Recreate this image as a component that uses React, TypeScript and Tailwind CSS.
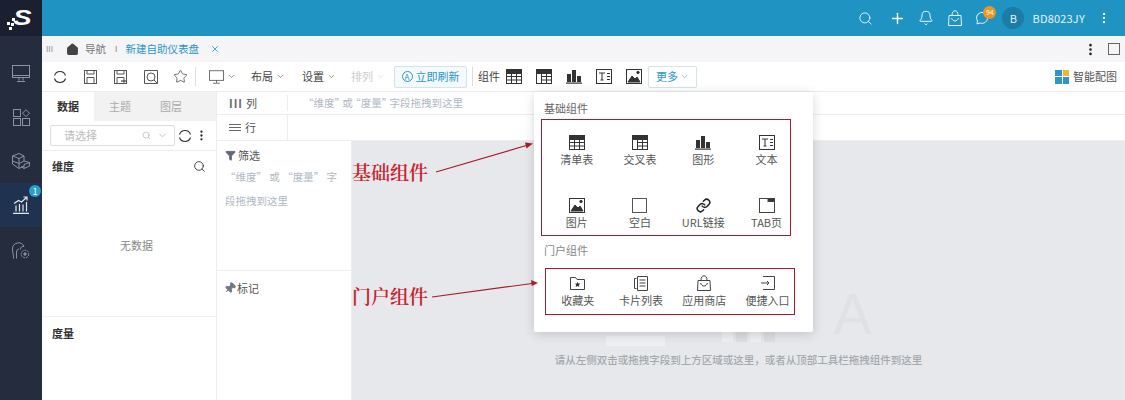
import type { ReactNode } from "react";
import { ChevronDown, Search, Plus, Bell, EllipsisVertical, House, X, Link, Star, Pin, Filter } from "lucide-react";

const font = "font-['Noto_Sans_CJK_SC','Liberation_Sans',sans-serif]";

function TableIcon({ cross = false }: { cross?: boolean }) {
  return (
    <svg width="16" height="15" viewBox="0 0 16 15" fill="none" stroke="#333" strokeWidth="1">
      <rect x="0.5" y="0.5" width="15" height="14" />
      <rect x="0.5" y="0.5" width="15" height="4" fill="#333" />
      {cross ? <path d="M5.5 4v10.5M5.5 7.5h10M5.5 11h10M10.5 4v10.5" /> : <path d="M5.5 4v10.5M10.5 4v10.5M.5 7.5h15M.5 11h15" />}
    </svg>
  );
}

function ChartIcon() {
  return (
    <svg width="16" height="15" viewBox="0 0 16 15" fill="#333">
      <rect x="1" y="5" width="4" height="8" />
      <rect x="6" y="1" width="4" height="12" />
      <rect x="11" y="7" width="4" height="6" />
      <rect x="0" y="13.5" width="16" height="1.2" />
    </svg>
  );
}

function TextIcon() {
  return (
    <svg width="16" height="15" viewBox="0 0 16 15" fill="none" stroke="#333" strokeWidth="1">
      <rect x="0.5" y="0.5" width="15" height="14" />
      <path d="M3 4h6M6 4v7M4.5 11h3M11 4.5h3M11 7.5h3M11 10.5h3" />
    </svg>
  );
}

function ImageIcon() {
  return (
    <svg width="16" height="15" viewBox="0 0 16 15" fill="none" stroke="#333" strokeWidth="1">
      <rect x="0.5" y="0.5" width="15" height="14" />
      <path d="M2 13l4-6 3 3 2-2 3 5z" fill="#333" />
      <circle cx="12" cy="3.5" r="1.2" fill="#333" />
    </svg>
  );
}

function TabIcon() {
  return (
    <svg width="16" height="15" viewBox="0 0 16 15" fill="none" stroke="#444" strokeWidth="1">
      <rect x="0.5" y="0.5" width="15" height="14" />
      <rect x="9" y="0.5" width="6.5" height="3" fill="#333" />
    </svg>
  );
}

function FolderStar() {
  return (
    <svg width="15" height="13" viewBox="0 0 15 13" fill="none" stroke="#444" strokeWidth="1">
      <path d="M.5 12.5V.5h5l1.5 2h7.5v10z" />
      <path d="M7.5 4.5l.9 1.900 2 .2-1.500 1.400.4 2-1.800-1-1.800 1 .4-2L5.100 6.600l2-.2z" fill="#333" stroke="none" />
    </svg>
  );
}

function CardList() {
  return (
    <svg width="14" height="15" viewBox="0 0 14 15" fill="none" stroke="#444" strokeWidth="1">
      <path d="M2.5 2.5H.5v10h2M4 .5h9.5v14H3.5V.5z" />
      <path d="M5.5 4h6M5.5 7h6M5.5 10h6" />
    </svg>
  );
}

function BagIcon({ stroke = "#444" }: { stroke?: string }) {
  return (
    <svg width="14" height="16" viewBox="0 0 14 16" fill="none" stroke={stroke} strokeWidth="1">
      <path d="M1 5.500h12l.5 10H.5zM4 5.500C4 2.500 5 .8 7 .8s3 1.700 3 4.700M3.500 8c.8 2 2 3 3.500 3s2.700-1 3.500-3" />
    </svg>
  );
}

function EntryIcon() {
  return (
    <svg width="14" height="14" viewBox="0 0 14 14" fill="none" stroke="#444" strokeWidth="1">
      <path d="M2 .5h11.500v13H2M0 7h8M6 5l2 2-2 2" />
    </svg>
  );
}

function RefreshRing() {
  return (
    <svg width="14" height="14" viewBox="0 0 14 14" fill="none" stroke="#333" strokeWidth="1.1">
      <path d="M1.500 5.500A5.800 5.800 0 0 1 12.500 5.500M12.500 8.500A5.800 5.800 0 0 1 1.500 8.500" />
    </svg>
  );
}

function Save({ extra = false }: { extra?: boolean }) {
  return (
    <svg width="13" height="14" viewBox="0 0 13 14" fill="none" stroke="#555" strokeWidth="1">
      <rect x="0.5" y="0.5" width="12" height="13" />
      <path d="M3 .5v3.500h7V.5M3 13.500V7.500h7v6" />
      {extra && <path d="M7 11h5" stroke="#222" />}
    </svg>
  );
}

function Preview() {
  return (
    <svg width="14" height="14" viewBox="0 0 14 14" fill="none" stroke="#555" strokeWidth="1">
      <path d="M.5.500h13v13H.5z" />
      <circle cx="7" cy="7" r="4" />
      <path d="M10 10l3 3" />
    </svg>
  );
}

function Monitor() {
  return (
    <svg width="15" height="14" viewBox="0 0 18 16" fill="none" stroke="#555" strokeWidth="1">
      <rect x="0.5" y="0.5" width="17" height="11.500" />
      <path d="M9 12v3M5 15.500h8" />
    </svg>
  );
}

function NavIcon({ i }: { i: number }) {
  const c = i === 3 ? "#e4e9ef" : "#8b93a3";
  if (i === 0)
    return (
      <svg width="18" height="17" viewBox="0 0 18 17" fill="none" stroke={c}>
        <rect x="0.5" y="0.5" width="17" height="12" />
        <path d="M.5 10.500h17M7 13v2.500M11 13v2.500M5 16.500h8" />
      </svg>
    );
  if (i === 1)
    return (
      <svg width="17" height="17" viewBox="0 0 17 17" fill="none" stroke={c}>
        <rect x="0.5" y="0.5" width="7" height="7" />
        <rect x="0.5" y="9.500" width="7" height="7" />
        <rect x="9.500" y="9.500" width="7" height="7" />
        <path d="M13 .7l3.500 3.500L13 7.700 9.500 4.200z" />
      </svg>
    );
  if (i === 2)
    return (
      <svg width="18" height="16" viewBox="0 0 18 16" fill="none" stroke={c}>
        <path d="M7 .5l5 2.500v5L7 10.500 .5 8V3zM.5 3L7 5.500 12 3M7 5.500v5M.5 8v3L7 15.500V10.500M7 15.500l5-2.500M12 8l5.500 1.500v3.500L12 15.500 9 13.500M12 11.500l5.500-2M12 11.500v4" />
      </svg>
    );
  if (i === 3)
    return (
      <svg width="16" height="18" viewBox="0 0 16 18" fill="none" stroke={c} strokeWidth="1.2">
        <path d="M1 7.500L5.500 4.500 8.500 6 13.500 1.500M10.500 1h3.500v3.500M3 9.500v6M6.500 8v7.500M10 8.500v7M13.500 6v9.500M0 17.300h16" />
      </svg>
    );
  return (
    <svg width="18" height="19" viewBox="0 0 18 19" fill="none" stroke={c}>
      <path d="M1.500 18.500c.5-3-1-5-1-9.500a6 6 0 0 1 11.500-2.500c-2.500-.5-3.500 1-3.500 3M4.500 18.500V12c0-1.500 1-3 2.500-3" />
      <circle cx="13" cy="14" r="3.800" strokeDasharray="2 .8" />
      <circle cx="13" cy="14" r="1.200" fill={c} />
    </svg>
  );
}

function ToolBtn({ label }: { label: string }) {
  return (
    <span className="flex items-center gap-[3px]">
      {label}
      <ChevronDown size={9} strokeWidth={1.5} />
    </span>
  );
}

function PickItem({ icon, label }: { icon: ReactNode; label: string }) {
  return (
    <div className="flex flex-col items-center">
      <div className="flex h-[16px] items-center">{icon}</div>
      <span className="text-[11px] leading-[18px] text-[#555]">{label}</span>
    </div>
  );
}

function ComponentMenu() {
  return (
    <div className="absolute left-[534px] top-[92px] z-10 h-[240px] w-[279px] rounded-[2px] bg-white pl-[7px] pr-[22px] shadow-[0_2px_12px_rgba(0,0,0,0.16)]">
      <div className="pl-[3px] pt-[8px] text-[11px] leading-[16px] text-[#666]">基础组件</div>
      <div className="mt-[3px] grid h-[117px] grid-cols-[repeat(4,63.3px)] grid-rows-[63px_1fr] border border-[#a81c2a] pl-[3px] pt-[14px]">
        <PickItem icon={<TableIcon />} label="清单表" />
        <PickItem icon={<TableIcon cross />} label="交叉表" />
        <PickItem icon={<ChartIcon />} label="图形" />
        <PickItem icon={<TextIcon />} label="文本" />
        <PickItem icon={<ImageIcon />} label="图片" />
        <PickItem icon={<span className="block h-[15px] w-[15px] border border-[#555]" />} label="空白" />
        <PickItem icon={<Link size={15} strokeWidth={2.4} color="#222" />} label="URL链接" />
        <PickItem icon={<TabIcon />} label="TAB页" />
      </div>
      <div className="pl-[3px] pt-[6px] text-[11px] leading-[16px] text-[#888]">门户组件</div>
      <div className="-mr-[4px] ml-[4px] mt-[10px] grid h-[47px] grid-cols-[repeat(4,63.3px)] border border-[#a81c2a] pt-[6px]">
        <PickItem icon={<FolderStar />} label="收藏夹" />
        <PickItem icon={<CardList />} label="卡片列表" />
        <PickItem icon={<BagIcon />} label="应用商店" />
        <PickItem icon={<EntryIcon />} label="便捷入口" />
      </div>
    </div>
  );
}

function Annotations() {
  return (
    <>
      <svg className="absolute left-[352px] top-[130px] z-20" width="190" height="180" viewBox="0 0 190 180" fill="none">
        <path d="M84 42L176 15" stroke="#a81c2a" strokeWidth="1.2" />
        <path d="M181 13.500l-8-1 1.500 6z" fill="#a81c2a" />
        <path d="M80 167L180 153.500" stroke="#a81c2a" strokeWidth="1.2" />
        <path d="M186 153l-7-3 .8 6z" fill="#a81c2a" />
      </svg>
      <span className="absolute left-[352px] top-[160px] z-20 font-['Noto_Serif_CJK_SC','Noto_Sans_CJK_SC',serif] text-[19px] font-semibold leading-[24px] text-[#c8202c]">基础组件</span>
      <span className="absolute left-[352px] top-[284px] z-20 font-['Noto_Serif_CJK_SC','Noto_Sans_CJK_SC',serif] text-[19px] font-semibold leading-[24px] text-[#c8202c]">门户组件</span>
    </>
  );
}

export default function App() {
  return (
    <div className={`relative flex h-[400px] w-[1125px] overflow-hidden bg-white text-[11px] ${font}`}>
      {/* left nav */}
      <div className="flex w-[42px] shrink-0 flex-col bg-[#252c3e]">
        <div className="relative flex h-[36px] items-center justify-center bg-[#1a2030]">
          <span className="ml-[3px] scale-x-125 font-['Liberation_Sans',sans-serif] text-[22px] font-bold italic leading-none text-white">S</span>
          <svg className="absolute left-[7px] top-[18px]" width="9" height="12" viewBox="0 0 9 12" fill="#fff">
            <rect x="5" y="0" width="3" height="3" />
            <rect x="0" y="4" width="3" height="3" />
            <rect x="4" y="5" width="3" height="3" />
            <rect x="2" y="9" width="3" height="3" />
          </svg>
        </div>
        <div className="flex flex-col pt-[15px]">
          {[0, 1, 2, 3, 4].map((i) => (
            <div key={i} className={`relative flex h-[44px] items-center justify-center ${i === 3 ? "bg-[#1f3350]" : ""}`}>
              <NavIcon i={i} />
              {i === 3 && (
                <span className="absolute right-[1px] top-[2px] flex h-[12px] w-[12px] items-center justify-center rounded-full bg-[#2a9fc9] text-[9px] leading-none text-white">1</span>
              )}
            </div>
          ))}
        </div>
      </div>

      <div className="flex min-w-0 flex-1 flex-col">
        {/* top bar */}
        <div className="flex h-[36px] shrink-0 items-center justify-end bg-[#1f93c2] pr-[14px] text-white">
          <Search size={15} strokeWidth={1.5} color="#e6f4fa" />
          <Plus size={17} strokeWidth={2} className="ml-[16px]" />
          <Bell size={16} strokeWidth={1.4} className="ml-[12px]" />
          <span className="ml-[14px] flex"><BagIcon stroke="#e6f4fa" /></span>
          <span className="relative ml-[12px] flex">
            <svg width="16" height="15" viewBox="0 0 16 15" fill="none" stroke="#e6f4fa">
              <path d="M3 13l.5-3A5.500 5.500 0 1 1 6 12z" />
            </svg>
            <span className="absolute -right-[6px] -top-[5px] flex h-[13px] w-[13px] items-center justify-center rounded-full bg-[#f0941e] text-[7px] leading-none text-white">94</span>
          </span>
          <span className="ml-[12px] flex h-[22px] w-[22px] items-center justify-center rounded-full bg-[#1b7ca6] text-[11px] text-[#e6f4fa]">B</span>
          <span className="ml-[8px] text-[11px] tracking-[0.2px] text-[#e6f4fa]">BD8023JY</span>
          <EllipsisVertical size={14} strokeWidth={2} className="ml-[12px]" />
        </div>

        {/* tabs */}
        <div className="flex h-[26px] shrink-0 items-center bg-[#f5f5f7] pl-[4px] pr-[5px] text-[10.5px] text-[#777]">
          <span className="text-[8px] text-[#888]">III</span>
          <House size={13} fill="#444" color="#444" className="ml-[13px]" />
          <span className="ml-[6px]">导航</span>
          <span className="ml-[9px] text-[8px]">I</span>
          <span className="ml-[8px] text-[#2a97c4]">新建自助仪表盘</span>
          <X size={10} color="#2a97c4" className="ml-[11px]" />
          <EllipsisVertical size={15} strokeWidth={2.2} color="#222" className="ml-auto" />
          <span className="ml-[10px] block h-[12px] w-[12px] border border-[#666]" />
        </div>

        {/* toolbar */}
        <div className="flex h-[30px] shrink-0 items-center border-b border-[#ececec] pl-[11px] pr-[8px] text-[11px] text-[#444]">
          <RefreshRing />
          <span className="ml-[17px] flex"><Save /></span>
          <span className="ml-[17px] flex"><Save extra /></span>
          <span className="ml-[17px] flex"><Preview /></span>
          <Star size={15} strokeWidth={1.1} color="#333" className="ml-[15px]" />
          <span className="ml-[7px] h-[19px] w-px bg-[#ddd]" />
          <span className="ml-[13px] flex items-center gap-[3px]"><Monitor /><ChevronDown size={9} strokeWidth={1.5} /></span>
          <span className="ml-[15px]"><ToolBtn label="布局" /></span>
          <span className="ml-[17px]"><ToolBtn label="设置" /></span>
          <span className="ml-[15px] text-[#ccc]"><ToolBtn label="排列" /></span>
          <span className="ml-[9px] flex h-[22px] w-[73px] items-center justify-center gap-[3px] rounded-[2px] border border-[#d5e3ea] bg-[#f4f9fb] text-[#2a97c4]">
            <span className="flex h-[11px] w-[11px] items-center justify-center rounded-full border border-[#2a97c4] text-[8px] leading-none">A</span>
            立即刷新
          </span>
          <span className="ml-[5px] h-[19px] w-px bg-[#ddd]" />
          <span className="ml-[5px]">组件</span>
          <span className="ml-[6px] flex"><TableIcon /></span>
          <span className="ml-[14px] flex"><TableIcon cross /></span>
          <span className="ml-[14px] flex"><ChartIcon /></span>
          <span className="ml-[14px] flex"><TextIcon /></span>
          <span className="ml-[14px] flex"><ImageIcon /></span>
          <span className="ml-[6px] flex h-[22px] w-[49px] items-center justify-center gap-[2px] rounded-[2px] border border-[#d5e3ea] text-[#2a97c4]">
            更多<ChevronDown size={9} strokeWidth={1.5} />
          </span>
          <span className="ml-auto grid h-[14px] w-[14px] grid-cols-2 gap-px">
            <i className="bg-[#2a97c4]" /><i className="bg-[#f2b632]" /><i className="bg-[#2a97c4]" /><i className="bg-[#2a97c4]" />
          </span>
          <span className="ml-[4px] text-[#555]">智能配图</span>
        </div>

        <div className="flex min-h-0 flex-1">
          {/* data panel */}
          <div className="flex w-[175px] shrink-0 flex-col border-r border-[#eee]">
            <div className="flex h-[29px] shrink-0 bg-[#f2f2f2] text-[11px] text-[#aaa]">
              <span className="flex w-[52px] items-center justify-center bg-white font-bold text-[#333]">数据</span>
              <span className="flex w-[52px] items-center justify-center">主题</span>
              <span className="flex w-[50px] items-center justify-center">图层</span>
            </div>
            <div className="flex h-[30px] shrink-0 items-center border-b border-[#eee] pl-[8px]">
              <div className="flex h-[21px] w-[125px] items-center rounded-[2px] border border-[#ddd] pl-[13px] pr-[6px] text-[#bbb]">
                请选择
                <Search size={9} color="#bbb" className="ml-auto" />
                <ChevronDown size={11} color="#bbb" className="ml-[6px]" />
              </div>
              <span className="ml-[3px] flex"><RefreshRing /></span>
              <EllipsisVertical size={13} strokeWidth={2.2} color="#222" className="ml-[3px]" />
            </div>
            <div className="flex h-[166px] shrink-0 flex-col border-b border-[#f0f0f0] px-[10px]">
              <div className="flex h-[30px] items-center justify-between">
                <span className="font-bold text-[#333]">维度</span>
                <Search size={13} strokeWidth={1.5} color="#222" />
              </div>
              <div className="ml-[15px] mt-[56px] text-center text-[#888]">无数据</div>
            </div>
            <div className="px-[10px] pt-[8px] font-bold text-[#333]">度量</div>
          </div>

          <div className="flex min-w-0 flex-1 flex-col">
            {/* shelves */}
            <div className="flex h-[23px] shrink-0 items-center border-b border-[#eee] text-[#555]">
              <span className="flex w-[71px] items-center gap-[3px] border-r border-[#eee] pl-[12px]">
                <span className="font-bold tracking-[1px] text-[#667]">III</span>列
              </span>
              <span className="ml-[15px] text-[10.5px] text-[#b0b8c4] [word-spacing:-5px]">“维度” 或 “度量” 字段拖拽到这里</span>
            </div>
            <div className="flex h-[26px] shrink-0 items-center border-b border-[#eee] text-[#555]">
              <span className="flex h-full w-[71px] items-center gap-[4px] border-r border-[#eee] pl-[12px]">
                <span className="flex w-[12px] flex-col gap-[2px]">
                  <i className="h-px bg-[#667]" /><i className="h-px bg-[#667]" /><i className="h-px bg-[#667]" />
                </span>
                行
              </span>
            </div>

            <div className="flex min-h-0 flex-1">
              {/* filters */}
              <div className="flex w-[135px] shrink-0 flex-col border-r border-[#eee]">
                <div className="h-[130px] shrink-0 border-b border-[#eee] pl-[8px] pr-[4px] pt-[6px]">
                  <div className="flex items-center gap-[2px] text-[#555]">
                    <Filter size={11} fill="#667" color="#667" />筛选
                  </div>
                  <p className="mt-px text-[10.5px] leading-[24px] text-[#b0b8c4]">“维度” 或 “度量” 字<br />段拖拽到这里</p>
                </div>
                <div className="flex items-center gap-px pl-[7px] pt-[9px] text-[#555]">
                  <Pin size={12} fill="#778" color="#778" className="rotate-45" />标记
                </div>
              </div>

              {/* canvas */}
              <div className="flex min-w-0 flex-1 flex-col items-center bg-[#e6e8eb] pt-[148px]">
                <div className="flex h-[58px] w-[266px] items-end justify-between">
                  <i className="mb-px block h-[10px] w-[59px] bg-[#eef0f2]" />
                  <div className="mb-[5px] flex h-[10px] gap-[3px]">
                    <i className="block w-[11px] bg-[#eef0f2]" />
                    <i className="block w-[11px] bg-[#dcdee1]" />
                    <i className="block w-[11px] bg-[#eef0f2]" />
                    <i className="block w-[11px] bg-[#dcdee1]" />
                  </div>
                  <span className="mb-[9px] font-['Liberation_Sans',sans-serif] text-[57px] leading-[48px] text-[#dfe1e4]">A</span>
                </div>
                <span className="mt-[5px] text-[10.5px] font-medium text-[#a5a8ab]">请从左侧双击或拖拽字段到上方区域或这里，或者从顶部工具栏拖拽组件到这里</span>
              </div>
            </div>
          </div>
        </div>
      </div>

      <ComponentMenu />
      <Annotations />
    </div>
  );
}
